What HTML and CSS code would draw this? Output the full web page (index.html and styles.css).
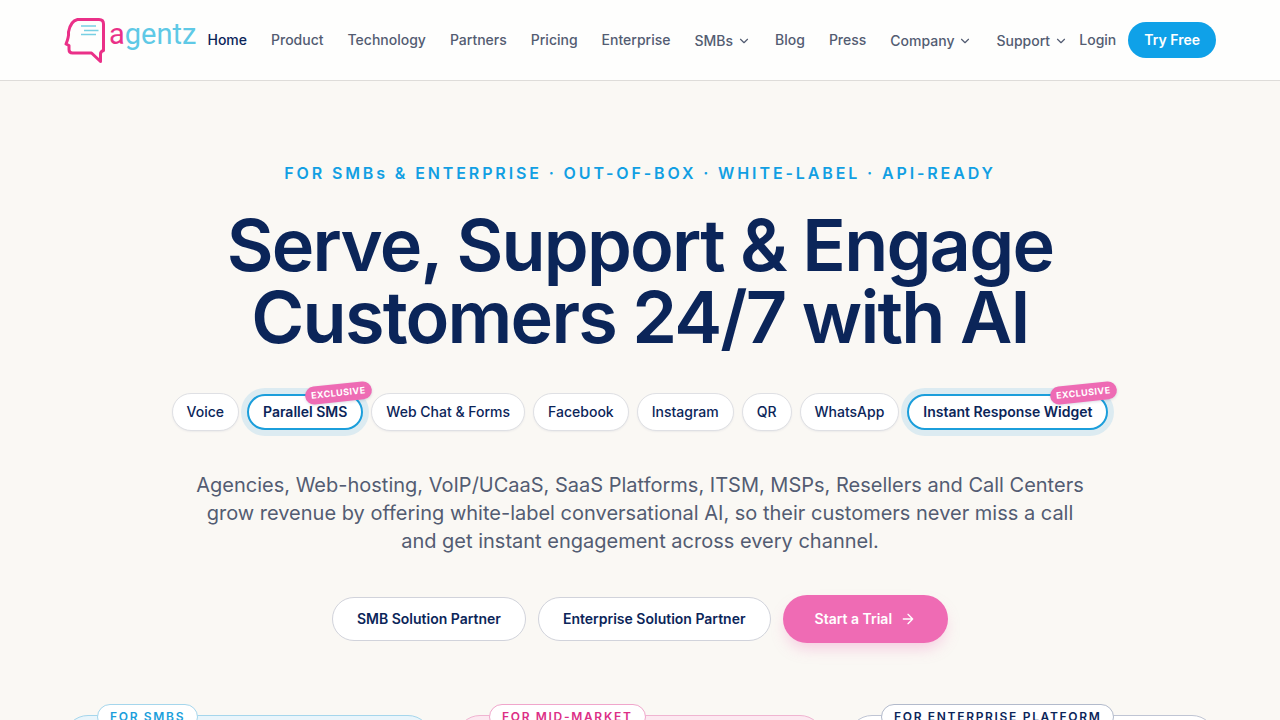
FILE: index.html
```html
<!DOCTYPE html>
<html lang="en">
<head>
<meta charset="utf-8">
<meta name="viewport" content="width=device-width, initial-scale=1">
<title>Agentz</title>
<link rel="stylesheet" href="styles.css">
</head>
<body>
<header class="header">
  <div class="header-inner">
    <a class="logo" href="#" aria-label="agentz">
      <svg class="logo-mark" width="43" height="48" viewBox="0 0 43 48" fill="none" aria-hidden="true">
        <path d="M13.500 3.500H35Q39.500 3.500 39.500 8V34.500Q36.500 35.500 36.500 38V45.500L27.500 37H8.500Q5 37 5 33.500V29.500L2 28Q5 21 4.500 16Q6.500 5 13.500 3.500Z" stroke="#ea3088" stroke-width="3" stroke-linejoin="round"/>
        <path d="M17 10H32M20 14.500H34.500M17 18.500H32" stroke="#78cfe3" stroke-width="1.700"/>
      </svg>
      <span class="logo-text"><span class="logo-a">a</span>gentz</span>
    </a>
    <nav class="nav">
      <a class="nav-link active" href="#">Home</a>
      <a class="nav-link" href="#">Product</a>
      <a class="nav-link" href="#">Technology</a>
      <a class="nav-link" href="#">Partners</a>
      <a class="nav-link" href="#">Pricing</a>
      <a class="nav-link" href="#">Enterprise</a>
      <button class="nav-link nav-menu" type="button">SMBs<svg class="chevron" viewBox="0 0 24 24"><path d="m6 9 6 6 6-6"/></svg></button>
      <a class="nav-link" href="#">Blog</a>
      <a class="nav-link" href="#">Press</a>
      <button class="nav-link nav-menu" type="button">Company<svg class="chevron" viewBox="0 0 24 24"><path d="m6 9 6 6 6-6"/></svg></button>
      <button class="nav-link nav-menu" type="button">Support<svg class="chevron" viewBox="0 0 24 24"><path d="m6 9 6 6 6-6"/></svg></button>
    </nav>
    <div class="account">
      <a class="nav-link" href="#">Login</a>
      <a class="try" href="#">Try Free</a>
    </div>
  </div>
</header>
<main class="main">
  <section class="hero">
    <p class="eyebrow">FOR SMBs &amp; ENTERPRISE · OUT-OF-BOX · WHITE-LABEL · API-READY</p>
    <h1 class="title">Serve, Support &amp; Engage Customers 24/7 with AI</h1>
    <ul class="channels">
      <li class="chip">Voice</li>
      <li class="chip featured">Parallel SMS<span class="flag">EXCLUSIVE</span></li>
      <li class="chip">Web Chat &amp; Forms</li>
      <li class="chip">Facebook</li>
      <li class="chip">Instagram</li>
      <li class="chip">QR</li>
      <li class="chip">WhatsApp</li>
      <li class="chip featured">Instant Response Widget<span class="flag">EXCLUSIVE</span></li>
    </ul>
    <p class="lead">Agencies, Web-hosting, VoIP/UCaaS, SaaS Platforms, ITSM, MSPs, Resellers and Call Centers grow revenue by offering white-label conversational AI, so their customers never miss a call and get instant engagement across every channel.</p>
    <div class="actions">
      <a class="btn" href="#">SMB Solution Partner</a>
      <a class="btn" href="#">Enterprise Solution Partner</a>
      <a class="btn btn-primary" href="#">Start a Trial<svg class="arrow" viewBox="0 0 24 24"><path d="M5 12h14M12 5l7 7-7 7"/></svg></a>
    </div>
  </section>
  <section class="cards">
    <article class="card card-smb"><span class="tag">FOR SMBS</span></article>
    <article class="card card-mid"><span class="tag">FOR MID-MARKET</span></article>
    <article class="card card-ent"><span class="tag">FOR ENTERPRISE PLATFORM</span></article>
  </section>
</main>
</body>
</html>
```
FILE: styles.css
```css
* { box-sizing: border-box; }

body {
  margin: 0;
  background: #faf8f4;
  color: #0b2559;
  font-family: Inter, "Liberation Sans", sans-serif;
  -webkit-font-smoothing: antialiased;
}

a { color: inherit; text-decoration: none; }

.header {
  background: #fefefd;
  border-bottom: 1px solid #dedcd9;
}

.header-inner {
  display: flex;
  align-items: center;
  justify-content: space-between;
  max-width: 1280px;
  height: 80px;
  margin: 0 auto;
  padding: 0 64px;
}

.logo { display: flex; align-items: center; gap: 2px; }
.logo-mark { display: block; }

.logo-text {
  padding-bottom: 12px;
  color: #5fc9e6;
  font-family: Roboto, sans-serif;
  font-size: 29px;
  line-height: 36px;
}

.logo-a { color: #ea3088; }

.nav { display: flex; align-items: center; gap: 24px; }

.nav-link {
  color: #535c72;
  font-size: 14px;
  font-weight: 500;
  line-height: 20px;
}

.nav-link.active { color: #0b2559; }

.nav-menu {
  display: flex;
  align-items: center;
  gap: 4px;
  padding: 2px 0 0;
  border: 0;
  background: none;
  font-family: inherit;
}

.chevron, .arrow {
  width: 14px;
  height: 14px;
  fill: none;
  stroke: currentColor;
  stroke-width: 2;
  stroke-linecap: round;
  stroke-linejoin: round;
}

.account { display: flex; align-items: center; gap: 12px; }

.try {
  padding: 8px 16px;
  border-radius: 18px;
  background: #0fa1e8;
  color: #fff;
  font-size: 14px;
  font-weight: 600;
  line-height: 20px;
}

.main {
  max-width: 1280px;
  margin: 0 auto;
  padding: 80px 64px;
}

.hero {
  display: flex;
  flex-direction: column;
  align-items: center;
  text-align: center;
}

.eyebrow {
  margin: 0 0 24px;
  color: #119fe3;
  font-size: 16px;
  font-weight: 600;
  line-height: 24px;
  letter-spacing: 0.18em;
}

.title {
  max-width: 1024px;
  margin: 0 0 40px;
  font-size: 72px;
  font-weight: 600;
  line-height: 72px;
  letter-spacing: -0.025em;
  text-wrap: balance;
}

.channels {
  display: flex;
  flex-wrap: wrap;
  justify-content: center;
  align-items: center;
  gap: 8px;
  margin: 0;
  padding: 0;
  list-style: none;
}

.chip {
  position: relative;
  padding: 8px 14px;
  border: 1px solid #dfe0e4;
  border-radius: 19px;
  background: #fff;
  box-shadow: 0 1px 2px rgba(11, 37, 89, 0.06);
  font-size: 14px;
  font-weight: 500;
  line-height: 20px;
}

.featured {
  padding: 6px 14px;
  border: 2px solid #1b9edb;
  box-shadow: 0 0 0 6px #dcebf1;
  font-weight: 600;
}

.flag {
  position: absolute;
  top: -12px;
  right: -10px;
  padding: 3px 6px;
  border-radius: 9px;
  background: #ee6bb4;
  box-shadow: 0 1px 3px rgba(11, 37, 89, 0.15);
  color: #fff;
  font-size: 9px;
  font-weight: 700;
  line-height: 12px;
  letter-spacing: 0.05em;
  transform: rotate(-6deg);
}

.lead {
  max-width: 896px;
  margin: 40px 0;
  color: #535c72;
  font-size: 20px;
  line-height: 28px;
}

.actions {
  display: flex;
  flex-wrap: wrap;
  justify-content: center;
  align-items: center;
  gap: 12px;
}

.btn {
  padding: 11px 24px;
  border: 1px solid #d1d3db;
  border-radius: 24px;
  background: #fff;
  font-size: 14px;
  font-weight: 600;
  line-height: 20px;
}

.btn-primary {
  display: flex;
  align-items: center;
  gap: 8px;
  padding: 14px 32px;
  border: 0;
  background: #ef6bb4;
  box-shadow: 0 8px 16px -4px rgba(239, 107, 180, 0.35);
  color: #fff;
}

.arrow { width: 16px; height: 16px; }

.cards {
  display: grid;
  grid-template-columns: repeat(3, 1fr);
  gap: 24px;
  margin-top: 72px;
}

.card {
  position: relative;
  min-height: 320px;
  border: 1px solid #a5d6ec;
  border-radius: 24px;
  background: #e9f5fb;
}

.tag {
  position: absolute;
  top: -12px;
  left: 32px;
  padding: 4px 12px;
  border: 1px solid #a5d6ec;
  border-radius: 13px;
  background: #fff;
  color: #1b9edb;
  font-size: 12px;
  font-weight: 600;
  line-height: 16px;
  letter-spacing: 0.14em;
  white-space: nowrap;
}

.card-mid { border-color: #f0b4d1; background: #fce8f0; }
.card-mid .tag { border-color: #f0a6cb; color: #dc2f86; }
.card-ent { border-color: #bfc5d4; background: #fff; }
.card-ent .tag { border-color: #b2bacb; color: #0b2559; }
```
